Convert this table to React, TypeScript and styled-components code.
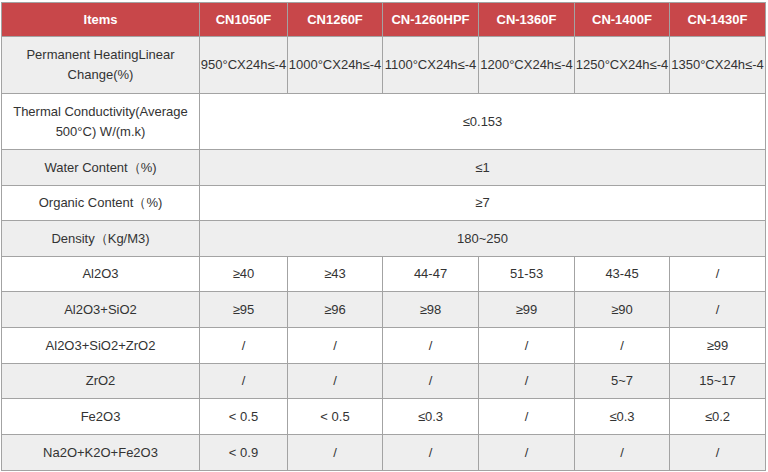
import React from "react";
import styled, { createGlobalStyle } from "styled-components";

const Global = createGlobalStyle`
  html, body { margin: 0; padding: 0; background: #ffffff; }
  body { font-family: "Liberation Sans", Arial, sans-serif; }
`;

const Grid = styled.div`
  display: grid;
  margin: 2px 0 0 1px;
  width: 765px;
  box-sizing: border-box;
  padding: 1px;
  gap: 1px;
  background: #a3a3a3;
  grid-template-columns: 197px 87px 94px 95px 95px 94px 95px;
  grid-template-rows: 33px 56px 55px 35px 34px 35px 34px 35px 35px 34px 35px 35px;
`;

const Cell = styled.div<{ $head?: boolean; $alt?: boolean; $span?: number; $label?: boolean }>`
  display: flex;
  align-items: center;
  justify-content: center;
  text-align: center;
  box-sizing: border-box;
  padding: 0 ${(p) => (p.$label ? "6px" : "0")};
  font-size: 13px;
  line-height: 20px;
  white-space: ${(p) => (p.$label ? "normal" : "nowrap")};
  overflow: visible;
  grid-column: ${(p) => (p.$span ? `span ${p.$span}` : "auto")};
  background: ${(p) => (p.$head ? "#c8474a" : p.$alt ? "#eeeeee" : "#ffffff")};
  color: ${(p) => (p.$head ? "#ffffff" : "#333333")};
  font-weight: ${(p) => (p.$head ? 700 : 400)};
`;

const headers = ["Items", "CN1050F", "CN1260F", "CN-1260HPF", "CN-1360F", "CN-1400F", "CN-1430F"];

type Row = { label: string; values: string[]; span?: boolean };

const rows: Row[] = [
  {
    label: "Permanent HeatingLinear Change(%)",
    values: ["950°CX24h≤-4", "1000°CX24h≤-4", "1100°CX24h≤-4", "1200°CX24h≤-4", "1250°CX24h≤-4", "1350°CX24h≤-4"],
  },
  { label: "Thermal Conductivity(Average 500°C) W/(m.k)", values: ["≤0.153"], span: true },
  { label: "Water Content（%)", values: ["≤1"], span: true },
  { label: "Organic Content（%)", values: ["≥7"], span: true },
  { label: "Density（Kg/M3)", values: ["180~250"], span: true },
  { label: "Al2O3", values: ["≥40", "≥43", "44-47", "51-53", "43-45", "/"] },
  { label: "Al2O3+SiO2", values: ["≥95", "≥96", "≥98", "≥99", "≥90", "/"] },
  { label: "Al2O3+SiO2+ZrO2", values: ["/", "/", "/", "/", "/", "≥99"] },
  { label: "ZrO2", values: ["/", "/", "/", "/", "5~7", "15~17"] },
  { label: "Fe2O3", values: ["< 0.5", "< 0.5", "≤0.3", "/", "≤0.3", "≤0.2"] },
  { label: "Na2O+K2O+Fe2O3", values: ["< 0.9", "/", "/", "/", "/", "/"] },
];

export default function App() {
  return (
    <>
      <Global />
      <Grid>
        {headers.map((h) => (
          <Cell key={h} $head>
            {h}
          </Cell>
        ))}
        {rows.map((r, i) => {
          const alt = i % 2 === 0;
          return (
            <React.Fragment key={r.label}>
              <Cell $alt={alt} $label>
                {r.label}
              </Cell>
              {r.values.map((v, j) => (
                <Cell key={j} $alt={alt} $span={r.span ? 6 : undefined}>
                  {v}
                </Cell>
              ))}
            </React.Fragment>
          );
        })}
      </Grid>
    </>
  );
}
